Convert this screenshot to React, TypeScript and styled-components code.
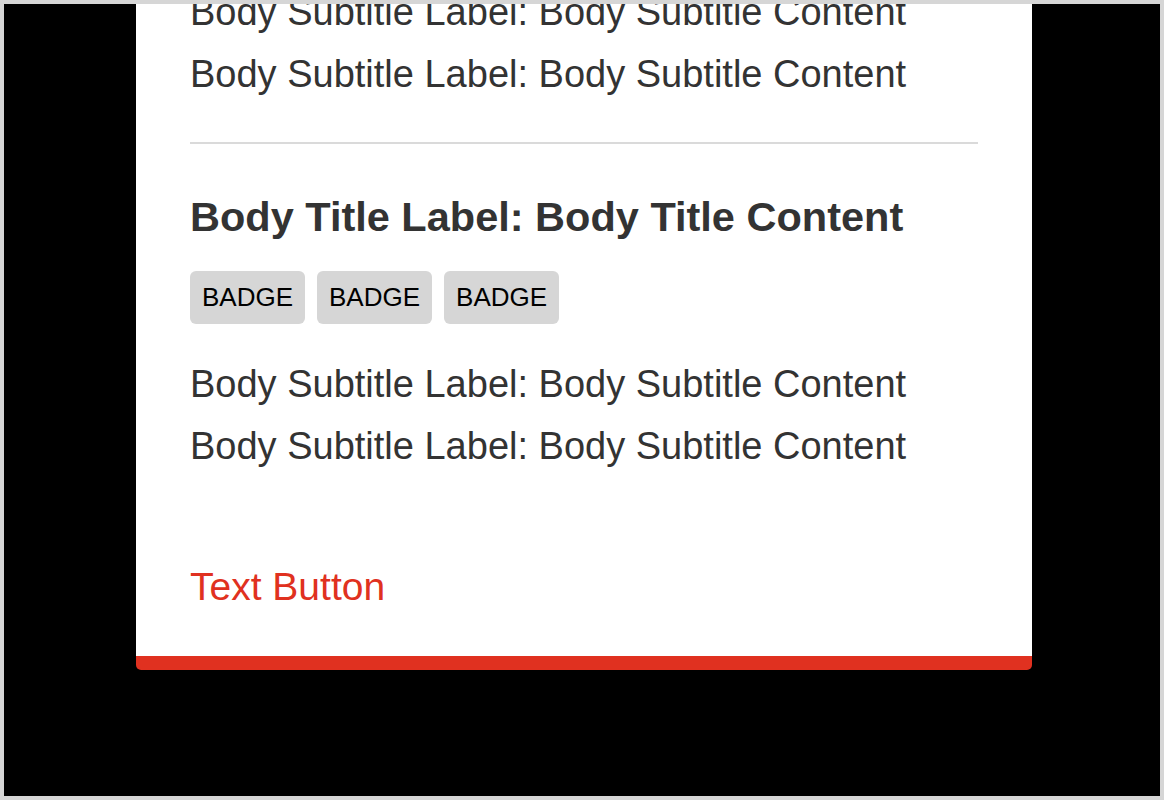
import styled, { createGlobalStyle } from "styled-components";

const GlobalStyle = createGlobalStyle`
  html, body {
    margin: 0;
    padding: 0;
    background: #d6d6d6;
  }
  * {
    box-sizing: border-box;
  }
`;

const Frame = styled.div`
  width: 1164px;
  height: 800px;
  border: 4px solid #d6d6d6;
  background-color: #000;
  overflow: hidden;
  display: flex;
  flex-direction: column;
  justify-content: flex-end;
  padding: 0 0 126px 132px;
`;

const Card = styled.div`
  flex-shrink: 0;
  width: 896px;
  background-color: #fff;
  padding: 0 54px;
  border-bottom: 14px solid #e03120;
  border-radius: 5px;
  font-family: "Liberation Sans", Arial, Helvetica, sans-serif;
  color: #333;
`;

const Section = styled.section`
  padding: 49px 0 37px;
`;

const Divider = styled.div`
  height: 2px;
  background-color: #dadada;
`;

const Title = styled.h2`
  margin: 0;
  font-size: 41.5px;
  line-height: 48px;
  font-weight: 700;
  color: #333;
`;

const BadgeRow = styled.div`
  display: flex;
  gap: 12px;
  margin-top: 30px;
`;

const Badge = styled.span`
  height: 53px;
  line-height: 53px;
  padding: 0 12px;
  border-radius: 6px;
  background-color: #d6d6d6;
  color: #000;
  font-size: 26px;
`;

const Subtitles = styled.div`
  margin-top: 29px;
`;

const Subtitle = styled.p`
  margin: 0;
  font-size: 38px;
  line-height: 62px;
`;

const Footer = styled.div`
  padding: 51px 0 47px;
`;

const TextButton = styled.button`
  border: none;
  background: none;
  padding: 0;
  font-family: inherit;
  font-size: 39px;
  line-height: 44px;
  color: #e03120;
  cursor: pointer;
`;

const sections = [
  { title: "Body Title Label: Body Title Content", badges: ["BADGE", "BADGE", "BADGE"], lines: 2 },
  { title: "Body Title Label: Body Title Content", badges: ["BADGE", "BADGE", "BADGE"], lines: 2 },
];

const App = () => {
  return (
    <>
      <GlobalStyle />
      <Frame>
        <Card>
          {sections.map((s, i) => (
            <div key={i}>
              {i > 0 && <Divider />}
              <Section>
                <Title>{s.title}</Title>
                <BadgeRow>
                  {s.badges.map((b, j) => (
                    <Badge key={j}>{b}</Badge>
                  ))}
                </BadgeRow>
                <Subtitles>
                  {Array.from({ length: s.lines }).map((_, k) => (
                    <Subtitle key={k}>Body Subtitle Label: Body Subtitle Content</Subtitle>
                  ))}
                </Subtitles>
              </Section>
            </div>
          ))}
          <Footer>
            <TextButton>Text Button</TextButton>
          </Footer>
        </Card>
      </Frame>
    </>
  );
};

export default App;
